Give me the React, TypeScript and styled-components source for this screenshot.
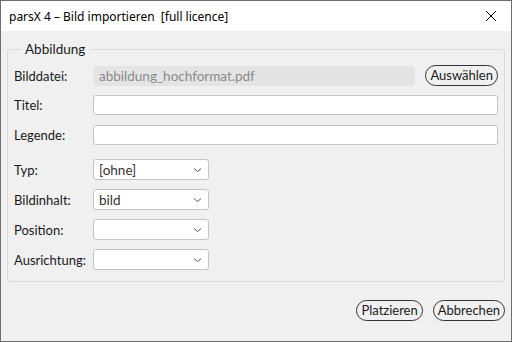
import React from 'react';
import styled, { createGlobalStyle } from 'styled-components';

const GlobalStyle = createGlobalStyle`
  html, body {
    margin: 0;
    padding: 0;
    width: 512px;
    height: 342px;
    overflow: hidden;
  }
  * { box-sizing: border-box; }
`;

const Window = styled.div`
  width: 512px;
  height: 342px;
  border: 1px solid #6e6e6e;
  background: #f0f0f0;
  display: flex;
  flex-direction: column;
  font-family: 'Lato', 'Noto Sans', sans-serif;
  font-size: 13px;
  color: #1a1a1a;
`;

const TitleBar = styled.div`
  height: 30px;
  background: #ffffff;
  display: flex;
  align-items: center;
  justify-content: space-between;
  padding: 0 14px 0 8px;
  font-family: 'Noto Sans', sans-serif;
  font-size: 12px;
  color: #000;
`;

const Body = styled.div`
  flex: 1;
  display: flex;
  flex-direction: column;
  padding: 11px 6px 0 6px;
`;

const GroupBox = styled.fieldset`
  margin: 0;
  border: 1px solid #dadada;
  border-radius: 3px;
  padding: 3px 6px 7px 6px;
  display: flex;
  flex-direction: column;
  height: 240px;
`;

const Legend = styled.legend`
  padding: 0 4px;
  margin-left: 7px;
  font-size: 13.5px;
  line-height: 14px;
`;

const Row = styled.div<{ $gap?: number; $h?: number }>`
  display: grid;
  grid-template-columns: 79px 1fr;
  align-items: center;
  height: ${(p) => p.$h ?? 20}px;
  margin-top: ${(p) => p.$gap ?? 10}px;
`;

const Label = styled.span`
  white-space: nowrap;
`;

const FieldLine = styled.div`
  display: flex;
  align-items: center;
  gap: 10px;
`;

const TextInput = styled.div<{ $disabled?: boolean }>`
  flex: 1;
  height: 20px;
  border-radius: 3px;
  border: 1px solid ${(p) => (p.$disabled ? '#e4e4e4' : '#c4c4c4')};
  background: ${(p) => (p.$disabled ? '#e4e4e4' : '#ffffff')};
  color: #8a8a8a;
  font-size: 13.5px;
  padding: 0 5px;
  display: flex;
  align-items: center;
`;

const Select = styled.div`
  width: 116px;
  height: 21px;
  border: 1px solid #c4c4c4;
  border-radius: 3px;
  background: #fff;
  display: flex;
  align-items: center;
  justify-content: space-between;
  padding: 0 6px 0 5px;
  color: #333;
  font-size: 13.5px;
`;

const PillButton = styled.button`
  height: 21px;
  padding: 0 4px;
  border: 1px solid #333;
  border-radius: 11px;
  background: #f0f0f0;
  font-family: inherit;
  font-size: 13px;
  color: #1a1a1a;
  line-height: 1;
`;

const Footer = styled.div`
  display: flex;
  justify-content: flex-end;
  gap: 10px;
  padding: 18px 0 0 0;
`;

const Chevron = () => (
  <svg width="9" height="6" viewBox="0 0 9 6">
    <path d="M1 1.5 L4.5 4.5 L8 1.5" stroke="#555" strokeWidth="1" fill="none" />
  </svg>
);

const CloseIcon = () => (
  <svg width="12" height="12" viewBox="0 0 12 12">
    <path d="M1 1 L11 11 M11 1 L1 11" stroke="#000" strokeWidth="1" />
  </svg>
);

const selects = [
  { label: 'Typ:', value: '[ohne]', gap: 14 },
  { label: 'Bildinhalt:', value: 'bild', gap: 9 },
  { label: 'Position:', value: '', gap: 9 },
  { label: 'Ausrichtung:', value: '', gap: 9 },
];

export default function App() {
  return (
    <>
      <GlobalStyle />
      <Window>
        <TitleBar>
          <span>parsX 4 – Bild importieren&nbsp; [full licence]</span>
          <CloseIcon />
        </TitleBar>
        <Body>
          <GroupBox>
            <Legend>Abbildung</Legend>
            <Row $gap={6}>
              <Label>Bilddatei:</Label>
              <FieldLine>
                <TextInput $disabled>abbildung_hochformat.pdf</TextInput>
                <PillButton>Auswählen</PillButton>
              </FieldLine>
            </Row>
            <Row $gap={10}>
              <Label>Titel:</Label>
              <TextInput />
            </Row>
            <Row $gap={10}>
              <Label>Legende:</Label>
              <TextInput />
            </Row>
            {selects.map((s) => (
              <Row key={s.label} $gap={s.gap} $h={21}>
                <Label>{s.label}</Label>
                <Select>
                  <span>{s.value}</span>
                  <Chevron />
                </Select>
              </Row>
            ))}
          </GroupBox>
          <Footer>
            <PillButton>Platzieren</PillButton>
            <PillButton>Abbrechen</PillButton>
          </Footer>
        </Body>
      </Window>
    </>
  );
}
